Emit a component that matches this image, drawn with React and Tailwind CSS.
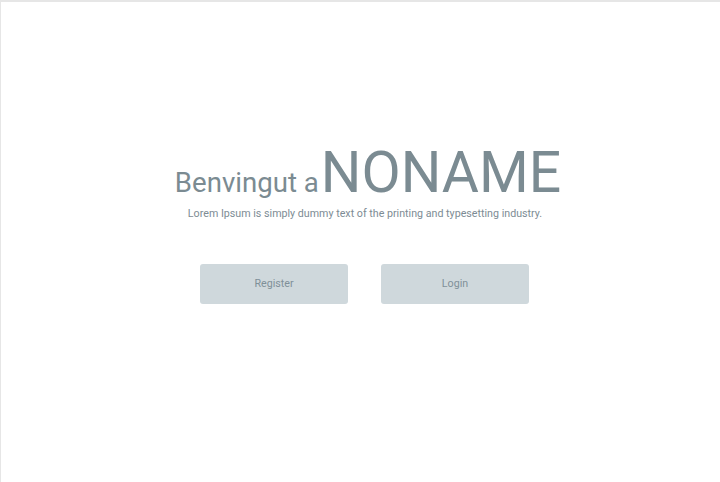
export default function App() {
  return (
    <div
      className="w-[720px] h-[482px] bg-white border-t-2 border-l border-[#e6e6e6] overflow-hidden"
      style={{ fontFamily: "Roboto, 'Liberation Sans', sans-serif" }}
    >
      <div className="flex flex-col items-center pt-[142px] pl-[8px] text-[#7b8b92]">
        <div className="flex items-baseline ml-[7px]">
          <span className="text-[27.6px] leading-none mr-[2px]">Benvingut a</span>
          <span className="text-[57px] leading-none">NONAME</span>
        </div>
        <p className="text-[10.7px] mt-[8px] leading-none text-[#7d8c94] ml-[1px]">
          Lorem Ipsum is simply dummy text of the printing and typesetting industry.
        </p>
        <div className="flex gap-[33px] mt-[44px]">
          <button className="w-[148px] h-[40px] bg-[#cfd8dc] rounded-[3px] text-[10.7px] text-[#7f9099]">
            Register
          </button>
          <button className="w-[148px] h-[40px] bg-[#cfd8dc] rounded-[3px] text-[10.7px] text-[#7f9099]">
            Login
          </button>
        </div>
      </div>
    </div>
  );
}
